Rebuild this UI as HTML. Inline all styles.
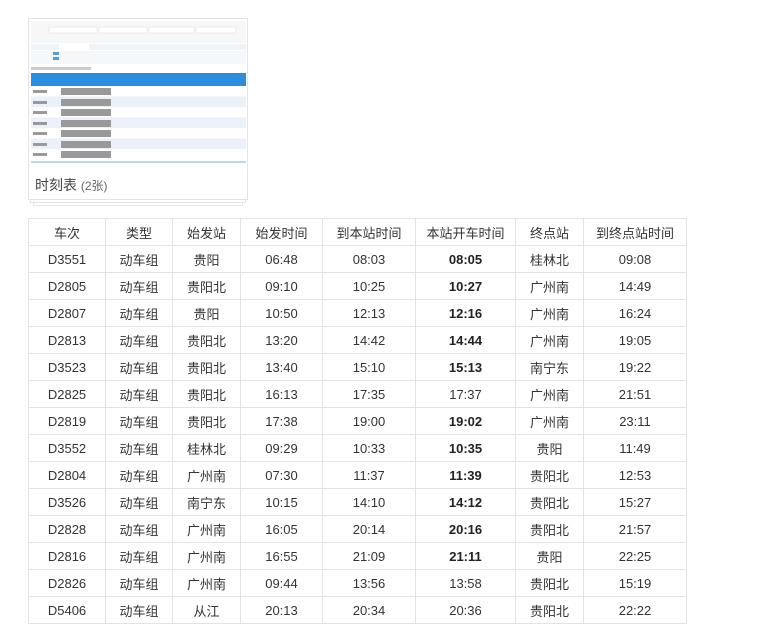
<!DOCTYPE html>
<html><head><meta charset="utf-8"><style>
body{margin:0;background:#fff;width:777px;height:644px;overflow:hidden;font-family:"Liberation Sans","Noto Sans CJK SC",sans-serif;}
.card{position:absolute;left:28px;top:18px;width:220px;height:182px;border:1px solid #e3e3e3;background:#fff;box-sizing:border-box;}
.s1{position:absolute;left:30px;top:200px;width:216px;height:3px;border:1px solid #e3e3e3;border-top:none;box-sizing:border-box}
.s2{position:absolute;left:33px;top:203px;width:210px;height:3px;border:1px solid #e8e8e8;border-top:none;box-sizing:border-box}
.thumb{position:absolute;left:2px;top:2px;width:215px;height:146px;overflow:hidden;background:#fff}
.cap{position:absolute;left:6px;top:156px;font-size:14px;color:#444}
.cap small{font-size:12px;color:#666}
table{position:absolute;left:28px;top:218px;border-collapse:collapse;font-size:13px;color:#333}
td{border:1px solid #e3e3e3;height:26px;padding:0;text-align:center}
b{font-weight:bold;color:#222}
</style></head><body>
<div class="card">
<div class="thumb">
<svg width="215" height="146" font-family="Liberation Sans" font-size="3">
<rect x="0" y="0" width="215" height="22" fill="#f7f7f7"/>
<rect x="18" y="6" width="48" height="6" fill="#fff" stroke="#ddd" stroke-width=".5"/>
<rect x="68" y="6" width="48" height="6" fill="#fff" stroke="#ddd" stroke-width=".5"/>
<rect x="118" y="6" width="45" height="6" fill="#fff" stroke="#ddd" stroke-width=".5"/>
<rect x="165" y="6" width="40" height="6" fill="#fff" stroke="#ddd" stroke-width=".5"/>
<rect x="0" y="23" width="215" height="6" fill="#eef3f8"/>
<rect x="28" y="23" width="30" height="6" fill="#fff"/>
<rect x="0" y="30" width="215" height="13" fill="#f5f8fb"/>
<rect x="22" y="31" width="6" height="3" fill="#5b9bd5"/>
<rect x="22" y="36" width="6" height="3" fill="#5b9bd5"/>
<rect x="0" y="46" width="60" height="3" fill="#ccc"/>
<rect x="0" y="52" width="215" height="13" fill="#2a8de0"/>
<g fill="#eaf1f8"><rect x="0" y="75.5" width="215" height="10.5"/><rect x="0" y="96.5" width="215" height="10.5"/><rect x="0" y="117.5" width="215" height="10.5"/></g>
<g fill="#999"><rect x="2" y="69" width="14" height="3"/><rect x="2" y="80" width="14" height="3"/><rect x="2" y="90" width="14" height="3"/><rect x="2" y="101" width="14" height="3"/><rect x="2" y="111" width="14" height="3"/><rect x="2" y="122" width="14" height="3"/><rect x="2" y="132" width="14" height="3"/>
<rect x="30" y="67" width="50" height="7"/><rect x="30" y="78" width="50" height="7"/><rect x="30" y="88" width="50" height="7"/><rect x="30" y="99" width="50" height="7"/><rect x="30" y="109" width="50" height="7"/><rect x="30" y="120" width="50" height="7"/><rect x="30" y="130" width="50" height="7"/></g>
<rect x="0" y="140" width="215" height="2" fill="#bcd6ee"/>
</svg>
</div>
<div class="cap">时刻表 <small>(2张)</small></div>
</div>
<div class="s1"></div><div class="s2"></div>
<table>
<colgroup><col style="width:77px"><col style="width:67px"><col style="width:68px"><col style="width:82px"><col style="width:93px"><col style="width:100px"><col style="width:68px"><col style="width:103px"></colgroup>
<tr><td>车次</td><td>类型</td><td>始发站</td><td>始发时间</td><td>到本站时间</td><td>本站开车时间</td><td>终点站</td><td>到终点站时间</td></tr>
<tr><td>D3551</td><td>动车组</td><td>贵阳</td><td>06:48</td><td>08:03</td><td><b>08:05</b></td><td>桂林北</td><td>09:08</td></tr>
<tr><td>D2805</td><td>动车组</td><td>贵阳北</td><td>09:10</td><td>10:25</td><td><b>10:27</b></td><td>广州南</td><td>14:49</td></tr>
<tr><td>D2807</td><td>动车组</td><td>贵阳</td><td>10:50</td><td>12:13</td><td><b>12:16</b></td><td>广州南</td><td>16:24</td></tr>
<tr><td>D2813</td><td>动车组</td><td>贵阳北</td><td>13:20</td><td>14:42</td><td><b>14:44</b></td><td>广州南</td><td>19:05</td></tr>
<tr><td>D3523</td><td>动车组</td><td>贵阳北</td><td>13:40</td><td>15:10</td><td><b>15:13</b></td><td>南宁东</td><td>19:22</td></tr>
<tr><td>D2825</td><td>动车组</td><td>贵阳北</td><td>16:13</td><td>17:35</td><td>17:37</td><td>广州南</td><td>21:51</td></tr>
<tr><td>D2819</td><td>动车组</td><td>贵阳北</td><td>17:38</td><td>19:00</td><td><b>19:02</b></td><td>广州南</td><td>23:11</td></tr>
<tr><td>D3552</td><td>动车组</td><td>桂林北</td><td>09:29</td><td>10:33</td><td><b>10:35</b></td><td>贵阳</td><td>11:49</td></tr>
<tr><td>D2804</td><td>动车组</td><td>广州南</td><td>07:30</td><td>11:37</td><td><b>11:39</b></td><td>贵阳北</td><td>12:53</td></tr>
<tr><td>D3526</td><td>动车组</td><td>南宁东</td><td>10:15</td><td>14:10</td><td><b>14:12</b></td><td>贵阳北</td><td>15:27</td></tr>
<tr><td>D2828</td><td>动车组</td><td>广州南</td><td>16:05</td><td>20:14</td><td><b>20:16</b></td><td>贵阳北</td><td>21:57</td></tr>
<tr><td>D2816</td><td>动车组</td><td>广州南</td><td>16:55</td><td>21:09</td><td><b>21:11</b></td><td>贵阳</td><td>22:25</td></tr>
<tr><td>D2826</td><td>动车组</td><td>广州南</td><td>09:44</td><td>13:56</td><td>13:58</td><td>贵阳北</td><td>15:19</td></tr>
<tr><td>D5406</td><td>动车组</td><td>从江</td><td>20:13</td><td>20:34</td><td>20:36</td><td>贵阳北</td><td>22:22</td></tr>
</table>
</body></html>
